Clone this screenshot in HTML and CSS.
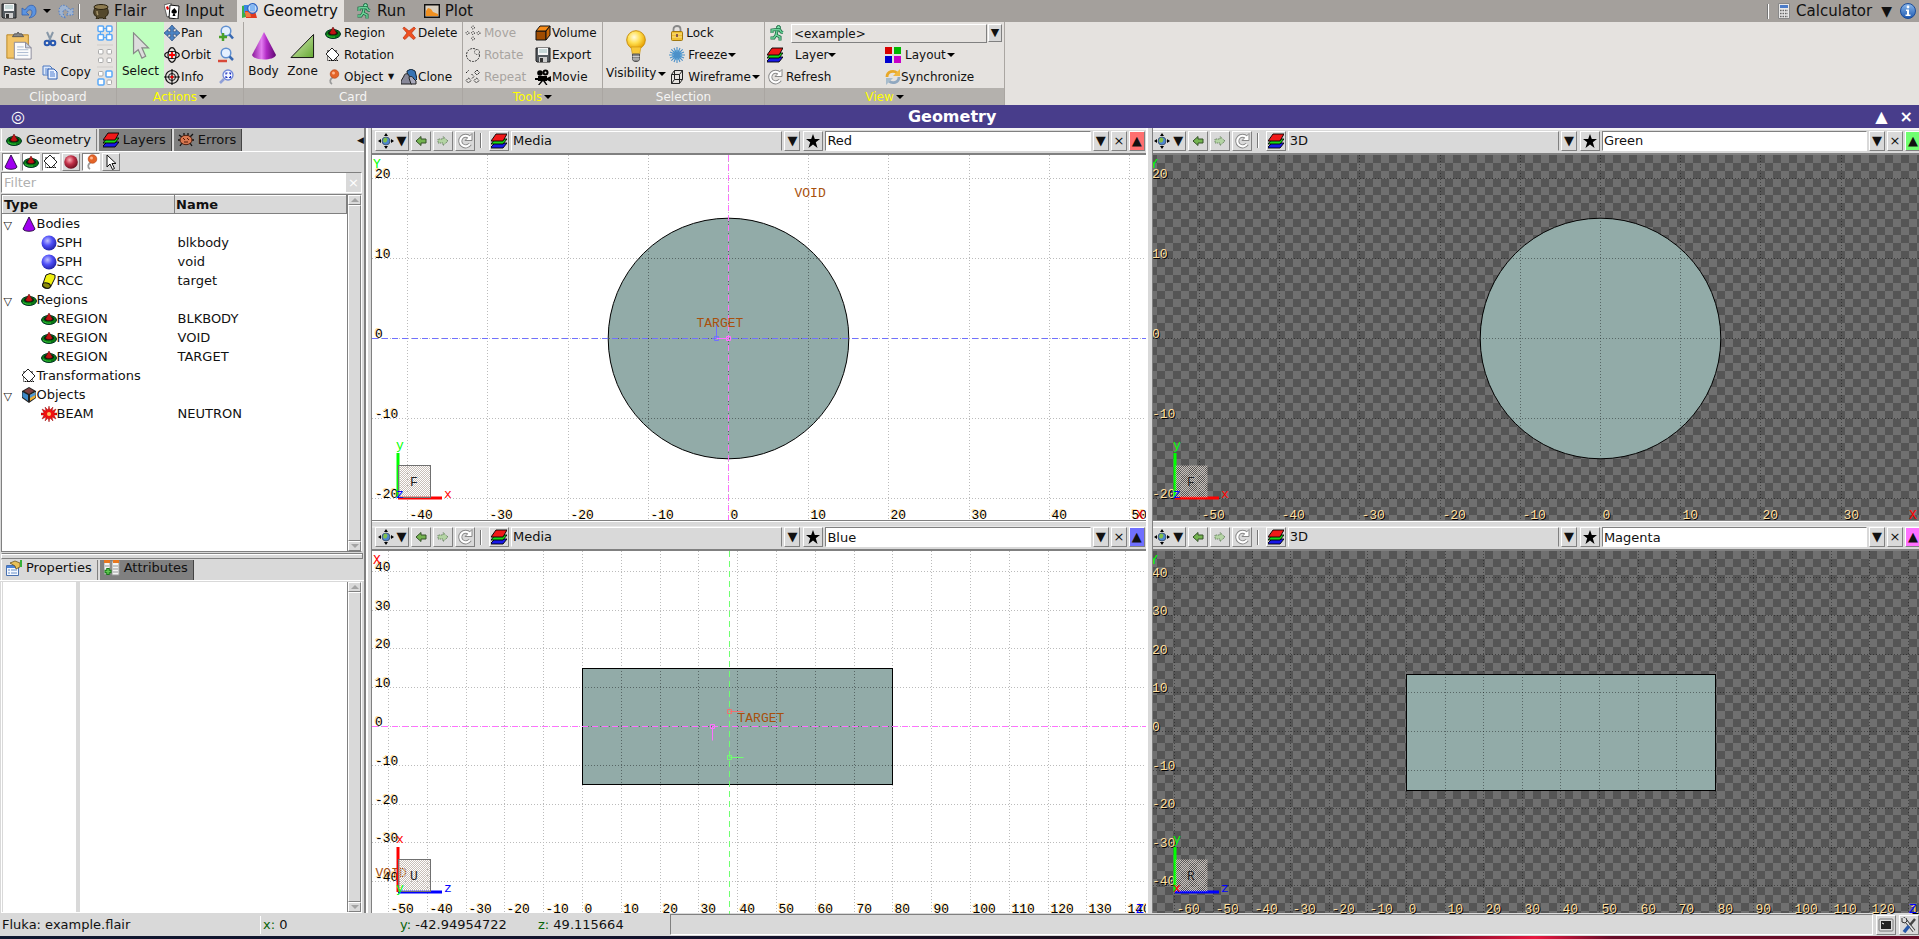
FILE: index.html
```html
<!DOCTYPE html>
<html lang="en">
<head>
<meta charset="utf-8">
<title>Flair - Geometry</title>
<link rel="stylesheet" href="styles.css">
</head>
<body>
<svg class="defs" width="0" height="0" aria-hidden="true">
  <defs>
    <linearGradient id="gCone" x1="0" x2="1" y1="0" y2="0"><stop offset="0" stop-color="#8a1b9a"/><stop offset=".4" stop-color="#e27cf0"/><stop offset=".6" stop-color="#b32cc6"/><stop offset="1" stop-color="#5e0870"/></linearGradient>
    <linearGradient id="gZone" x1="0" x2="1" y1="0" y2="1"><stop offset="0" stop-color="#e2f2c4"/><stop offset="1" stop-color="#64a832"/></linearGradient>
    <radialGradient id="gBlue" cx=".4" cy=".35" r=".65"><stop offset="0" stop-color="#c0c0ff"/><stop offset=".5" stop-color="#5050f8"/><stop offset="1" stop-color="#2424a8"/></radialGradient>
    <radialGradient id="gRed" cx=".4" cy=".35" r=".65"><stop offset="0" stop-color="#ffb0b8"/><stop offset=".5" stop-color="#c03048"/><stop offset="1" stop-color="#701020"/></radialGradient>
    <radialGradient id="gBulb" cx=".4" cy=".35" r=".65"><stop offset="0" stop-color="#fffbe0"/><stop offset=".5" stop-color="#ffdf50"/><stop offset="1" stop-color="#e8a000"/></radialGradient>
    <linearGradient id="gInfo" x1="0" x2="0" y1="0" y2="1"><stop offset="0" stop-color="#8cb8ea"/><stop offset="1" stop-color="#1c58b0"/></linearGradient>
    <pattern id="dither" width="2" height="2" patternUnits="userSpaceOnUse"><path d="M0 0h1v1H0zM1 1h1v1H1z" fill="#c8bfb8"/></pattern>
  </defs>
  <symbol id="save" viewBox="0 0 16 16"><path d="M1 1h14v14H2l-1-1z" fill="#555b60" stroke="#222"/><path d="M3 1h10v7H3z" fill="#f4f4f4"/><path d="M4 3h8M4 5h8" stroke="#9bb"/><path d="M4 10h8v5H4z" fill="#ccc"/><path d="M5 11h3v4H5z" fill="#333"/></symbol>
  <symbol id="undo" viewBox="0 0 16 16"><path d="M1 5v7h7L5.500 9.500C7 6 11 6 11 9c0 3-1 4-3 6 5-1 7-3 7-7 0-7-7-8-11-1z" fill="#5c94e0" stroke="#3060b0" stroke-width=".8"/></symbol>
  <symbol id="redo" viewBox="0 0 16 16"><path d="M15 5v7H8l2.500-2.500C9 6 5 6 5 9c0 3 1 4 3 6-5-1-7-3-7-7 0-7 7-8 11-1z" fill="#9fb4d0" stroke="#4c7cc8" stroke-dasharray="1.500 1.500"/></symbol>
  <symbol id="pot" viewBox="0 0 16 16"><path d="M2 5C0 8 0 12 4 14l-1 2h2l1-1h4l1 1h2l-1-2c4-2 4-6 2-9z" fill="#54482c" stroke="#2a220f"/><ellipse cx="8" cy="4" rx="7" ry="2.500" fill="#8c7a50" stroke="#2a220f"/><path d="M4 8c0 2 0 3 1 4" stroke="#a8966c" stroke-width="1.500" fill="none"/></symbol>
  <symbol id="cards" viewBox="0 0 16 16"><path d="M0 2l7-2 2 12-6 2z" fill="#fff" stroke="#333" stroke-width=".7"/><path d="M2 4l2-1 1 3-2 1z" fill="#d00"/><path d="M6 2l9 1-1 13-9-1z" fill="#fff" stroke="#111"/><path d="M10.500 5c2 3 3 3 2 5-1 1-2 0-2 0l1 3H8.500l1-3s-2 1-2-1c0-2 1-2 3-4z"/></symbol>
  <symbol id="geo" viewBox="0 0 16 16"><path d="M0 3l4-1v12l-4 1z" fill="#38b048"/><path d="M2 2h4v8H2z" fill="#3c88e0"/><path d="M3 8h10l2 7H4z" fill="#e03a20"/><path d="M3 9h5l1 5H4z" fill="#f07c40"/><circle cx="10.500" cy="5.500" r="4.800" fill="#bcdcff" fill-opacity=".85" stroke="#2860c0" stroke-width="1.200"/><path d="M8 2h5v6H8z" fill="#5ca0ee" opacity=".6"/></symbol>
  <symbol id="runner" viewBox="0 0 16 16"><circle cx="9.500" cy="2.500" r="2" fill="#7ce0a8" stroke="#186840"/><path d="M3 8V5l5-.500 3 .500 1 2 2 .500M8 6L7 10l4 2v3.500M7 10l-2 3H1.500" fill="none" stroke="#186840" stroke-width="3"/><path d="M3 8V5l5-.500 3 .500 1 2 2 .500M8 6L7 10l4 2v3.500M7 10l-2 3H1.500" fill="none" stroke="#6ed49a" stroke-width="1.400"/></symbol>
  <symbol id="plot" viewBox="0 0 16 16"><path d="M.7 1.700h14.600v12.600H.7z" fill="#d8cfc0" stroke="#111" stroke-width="1.400"/><path d="M2 13V8l2-3 3 1 2 3 5 2v2z" fill="#f09020"/></symbol>
  <symbol id="calc" viewBox="0 0 12 16"><path d="M.5.5h11v15H.5z" fill="#e8e8e8" stroke="#888"/><path d="M2 2h8v3H2z" fill="#4c7cc8"/><path d="M2 7.500h8M2 10.500h8M2 13.500h8" stroke="#666" stroke-width="1.600" stroke-dasharray="1.600 .9"/></symbol>
  <symbol id="info" viewBox="0 0 16 16"><circle cx="8" cy="8" r="7.500" fill="url(#gInfo)" stroke="#1c4c98"/><circle cx="8" cy="4" r="1.400" fill="#fff"/><path d="M6 6.500h3v5h1.500V13h-5v-1.500H7V8H6z" fill="#fff"/></symbol>
  <symbol id="paste" viewBox="0 0 28 30"><path d="M1 3h23v25H1z" fill="#f2c468" stroke="#b88420"/><path d="M7 5l2-3h3l1-2 1 2h3l2 3z" fill="#888" stroke="#555"/><path d="M9 11h12l6 6v12H9z" fill="#fbfbfb" stroke="#889"/><path d="M21 11v6h6z" fill="#ccd4e0" stroke="#889"/><path d="M12 16h7M12 19h12M12 22h12M12 25h12" stroke="#a8b8d0"/></symbol>
  <symbol id="cut" viewBox="0 0 16 16"><path d="M5 1l4 9M11 1L7 10" stroke="#8898a8" stroke-width="2"/><circle cx="5" cy="12" r="2.300" fill="none" stroke="#2858b0" stroke-width="2"/><circle cx="11" cy="12" r="2.300" fill="none" stroke="#2858b0" stroke-width="2"/></symbol>
  <symbol id="copy" viewBox="0 0 16 16"><path d="M1 2h7l2 2v7H1z" fill="#dce8fa" stroke="#4c78c0"/><path d="M3 5h4M3 7h4M3 9h4" stroke="#5c88d0"/><path d="M6 5h6l3 3v7H6z" fill="#eaf2ff" stroke="#2c5cb0"/><path d="M8 8h4M8 10h5M8 12h5" stroke="#4c7cd0"/></symbol>
  <symbol id="selAll" viewBox="0 0 16 16"><path d="M4 3.500h8M4 12.500h8M3.500 4v8M12.500 4v8" stroke="#58a8f8"/><g fill="#fff" stroke="#58a8f8" stroke-width="1.500"><rect x="1" y="1" width="5.500" height="5.500" rx="1"/><rect x="9.500" y="1" width="5.500" height="5.500" rx="1"/><rect x="1" y="9.500" width="5.500" height="5.500" rx="1"/><rect x="9.500" y="9.500" width="5.500" height="5.500" rx="1"/></g></symbol>
  <symbol id="selNone" viewBox="0 0 16 16"><g fill="#fff" stroke="#aaa"><rect x="1.500" y="1.500" width="4.500" height="4.500" rx="1"/><rect x="10" y="1.500" width="4.500" height="4.500" rx="1"/><rect x="1.500" y="10" width="4.500" height="4.500" rx="1"/><rect x="10" y="10" width="4.500" height="4.500" rx="1"/></g></symbol>
  <symbol id="selInv" viewBox="0 0 16 16"><g fill="#fff" stroke="#aaa"><rect x="1.500" y="1.500" width="4.500" height="4.500" rx="1"/><rect x="10" y="10" width="4.500" height="4.500" rx="1"/></g><g fill="#fff" stroke="#58a8f8" stroke-width="1.500"><rect x="9" y="1" width="6" height="6" rx="1"/><rect x="1" y="9" width="6" height="6" rx="1"/></g></symbol>
  <symbol id="arrow" viewBox="0 0 20 30"><path d="M2 1v22l5-4 4 9 4-2-4-9h7z" fill="#ddd" stroke="#888" stroke-width="1.300"/></symbol>
  <symbol id="pan" viewBox="0 0 16 16"><path d="M8 0l3.500 4H9.300v2.700H12V4.500L16 8l-4 3.500V9.300H9.300V12h2.200L8 16l-3.500-4h2.200V9.300H4v2.200L0 8l4-3.500v2.200h2.700V4H4.500z" fill="#4c84c4" stroke="#284c80" stroke-width=".7"/></symbol>
  <symbol id="orbit" viewBox="0 0 16 16"><ellipse cx="8" cy="8" rx="7.300" ry="3.500" fill="none" stroke="#111" stroke-width="1.200"/><ellipse cx="8" cy="8" rx="4" ry="7.300" fill="none" stroke="#111" stroke-width="1.200"/><path d="M5 5h6v6H5z" fill="#e5e2df"/><path d="M8 5v6M5 8h6" stroke="#f00" stroke-width="1.800"/></symbol>
  <symbol id="target" viewBox="0 0 16 16"><circle cx="8" cy="8" r="6.500" fill="none" stroke="#111" stroke-width="1.200"/><circle cx="8" cy="8" r="3.500" fill="none" stroke="#111"/><path d="M8 0v16M0 8h16" stroke="#111" stroke-width="1.200"/><circle cx="8" cy="8" r="1.500" fill="#e00"/></symbol>
  <symbol id="zoomIn" viewBox="0 0 16 16"><circle cx="8" cy="6" r="4.800" fill="#e4f0ff" stroke="#6090d0" stroke-width="1.500"/><path d="M11.500 9.500L15 13.500" stroke="#3868b0" stroke-width="2.500"/><path d="M5 8v8M1 12h8" stroke="#48a028" stroke-width="2.500"/></symbol>
  <symbol id="zoomOut" viewBox="0 0 16 16"><circle cx="8" cy="6" r="4.800" fill="#e4f0ff" stroke="#6090d0" stroke-width="1.500"/><path d="M11.500 9.500L15 13" stroke="#3868b0" stroke-width="2.500"/><path d="M0 14h9" stroke="#d84838" stroke-width="2.500"/></symbol>
  <symbol id="zoomFit" viewBox="0 0 16 16"><circle cx="10" cy="6" r="5" fill="#f4f8ff" stroke="#7088d8" stroke-width="1.300"/><path d="M6 10l-4 4" stroke="#90a0d8" stroke-width="2.500"/><path d="M8 5.500V4h1.500M11 4h1.500v1.500M12.500 7v1.500H11M9.500 8.500H8V7" fill="none" stroke="#2030c0" stroke-width="1.200"/></symbol>
  <symbol id="bigCone" viewBox="0 0 26 28"><path d="M13 0L1 23c2 6 22 6 24 0z" fill="url(#gCone)"/></symbol>
  <symbol id="zone" viewBox="0 0 26 26"><path d="M24.500 1v24H1z" fill="url(#gZone)" stroke="#111"/></symbol>
  <symbol id="region" viewBox="0 0 16 16"><ellipse cx="8" cy="9" rx="7.500" ry="4.500" fill="#0a7a14" stroke="#032"/><ellipse cx="8" cy="8" rx="5" ry="2.300" fill="#021"/><path d="M8 2L4.500 8c1 2 6 2 7 0z" fill="#c01414" stroke="#400" stroke-width=".5"/><path d="M2 10c2 2 5 2.500 8 2" stroke="#30c038" fill="none"/></symbol>
  <symbol id="rot" viewBox="0 0 16 16"><path d="M2.500 3.500h9v10h-9z" fill="none" stroke="#111" stroke-dasharray="1 1"/><path d="M7 1l7 7-6 6-7-7z" fill="#fff" stroke="#222"/><path d="M4 13.500h10" stroke="#111" stroke-dasharray="1 1"/></symbol>
  <symbol id="pin" viewBox="0 0 16 16"><path d="M8 8c-3 2-4 5-1 7" fill="none" stroke="#999" stroke-width="1.800"/><circle cx="9.500" cy="5" r="4.300" fill="#e46428" stroke="#b04010" stroke-width=".6"/><circle cx="8.500" cy="4" r="1.500" fill="#ffb890"/></symbol>
  <symbol id="del" viewBox="0 0 16 16"><path d="M3 2l5 4 5-4 1.500 1.500L10.500 8l4 5-2 1.500L8 10.500 4 14.500 2 13l4-5-4-4.500z" fill="#f05020" stroke="#b83010" stroke-width=".7"/></symbol>
  <symbol id="clone" viewBox="0 0 16 16"><path d="M6 2l4-2 4 2 2 8-2 2H7z" fill="#3874b4" stroke="#123"/><path d="M3 7c0-3 5-3 5 0l3 5v3H0v-3z" fill="#889" stroke="#222"/><path d="M8 9c0-2 4-2 4 0l3 3v3h-5z" fill="#aab" stroke="#222"/></symbol>
  <symbol id="move" viewBox="0 0 16 16"><g fill="none" stroke="#222" stroke-dasharray="1 1"><circle cx="8" cy="2.500" r="1.500"/><circle cx="8" cy="8" r="1.500"/><circle cx="8" cy="13.500" r="1.500"/><circle cx="2.500" cy="8" r="1.500"/><circle cx="13.500" cy="8" r="1.500"/></g></symbol>
  <symbol id="rotate" viewBox="0 0 16 16"><g fill="none" stroke="#333"><circle cx="8" cy="8" r="6.500" stroke-dasharray="2 1"/><circle cx="12" cy="5" r="2.500" fill="#e5e2df" stroke-dasharray="1 1"/></g></symbol>
  <symbol id="repeat" viewBox="0 0 16 16"><g fill="none" stroke="#222" stroke-dasharray="1.500 .700"><path d="M3.500 9l2.500 2.500L3.500 14 1 11.500zM11.500 9l2.500 2.500-2.500 2.500L9 11.500zM12 1l2.500 2.500L12 6 9.500 3.500zM6.500 5L9 7.500 6.500 10M1 4l3-3"/></g></symbol>
  <symbol id="volume" viewBox="0 0 16 16"><path d="M1 6h10v9H1z" fill="#a04c00" stroke="#111"/><path d="M1 6l4-5h10l-4 5z" fill="#f88c18" stroke="#111"/><path d="M11 6l4-5v9l-4 5z" fill="#c86808" stroke="#111"/></symbol>
  <symbol id="movie" viewBox="0 0 16 16"><circle cx="5" cy="4" r="2.800"/><circle cx="10.500" cy="3.500" r="3"/><path d="M3 7h9v5H3zM12 9l4-2v6l-4-2zM0 9h3v2H0zM6 12l-3 4h1.500L8 12l3 4h1.500L10 12z"/><circle cx="10.500" cy="3.500" r="1" fill="#ddd"/></symbol>
  <symbol id="bulb" viewBox="0 0 20 32"><circle cx="10" cy="10" r="9.300" fill="url(#gBulb)" stroke="#c89010"/><path d="M5 17h10l-1.500 8h-7z" fill="#f8c838" stroke="#c89010" stroke-width=".6"/><path d="M6.500 24h7v6l-2 1.500h-3l-2-1.500z" fill="#888" stroke="#555"/><path d="M6.500 26.500h7M6.500 29h7" stroke="#ccc"/></symbol>
  <symbol id="lock" viewBox="0 0 16 16"><path d="M4.500 7V4c0-4 7-4 7 0v3" fill="none" stroke="#888" stroke-width="1.800"/><rect x="2.500" y="6.500" width="11" height="9" rx="1" fill="#f0c030" stroke="#a07810"/><path d="M3 9h10M3 12h10" stroke="#fae28c"/><path d="M8 9v3" stroke="#634" stroke-width="1.500"/></symbol>
  <symbol id="freeze" viewBox="0 0 16 16"><circle cx="8" cy="8" r="5" fill="#7cbce8"/><path d="M8 0v16M0 8h16M2.300 2.300l11.400 11.400M13.700 2.300L2.300 13.700M5 1l6 14M11 1L5 15M1 5l14 6M1 11l14-6" stroke="#4c90c8" stroke-width="1.100"/></symbol>
  <symbol id="wire" viewBox="0 0 16 16"><path d="M2.500 5.500h8v9h-8zM5.500 1.500h8v9h-8zM2.500 5.500l3-4M10.500 5.500l3-4M10.500 14.500l3-4M2.500 14.500l3-4" fill="none" stroke="#222"/></symbol>
  <symbol id="layers" viewBox="0 0 16 16"><g stroke="#000" stroke-width=".9"><path d="M0 14l4-4h12l-4 5H0z" fill="#1818e8"/><path d="M0 11l4-5h12l-4 5z" fill="#18d818"/><path d="M0 8l5-7h11l-4 7z" fill="#f01818"/></g></symbol>
  <symbol id="layout" viewBox="0 0 16 16"><path d="M0 0h7v7H0z" fill="#d80000"/><path d="M9 0h7v7H9z" fill="#00b800"/><path d="M0 9h7v7H0z" fill="#0000d0"/><path d="M9 9h7v7H9z" fill="#c800c8"/></symbol>
  <symbol id="refresh" viewBox="0 0 16 16"><path d="M12.500 4.500A5.300 5.300 0 1 0 13 11" fill="none" stroke="#888" stroke-width="4"/><path d="M15 .5v7H8z" fill="#fff" stroke="#888"/><path d="M12.500 4.500A5.300 5.300 0 1 0 13 11" fill="none" stroke="#fff" stroke-width="2.200"/></symbol>
  <symbol id="sync" viewBox="0 0 16 16"><path d="M2 8c0-6 7-7 10-4" fill="none" stroke="#e8a828" stroke-width="2.800"/><path d="M15 0v7H8z" fill="#f0b840"/><path d="M14 8c0 6-7 7-10 4" fill="none" stroke="#90a8c0" stroke-width="2.800"/><path d="M1 16V9h7z" fill="#a8bccc"/></symbol>
  <symbol id="bug" viewBox="0 0 16 16"><path d="M1 3l3 2M15 2l-3 3M0 8h3M16 8h-3M2 14l2-3M14 14l-2-3M6 1v3M10 1v3" stroke="#111" stroke-width="1.300"/><ellipse cx="8" cy="8" rx="6" ry="4.700" fill="#d87850" stroke="#502010"/><path d="M5 6l2 2M9 6l2 2M6 10h4" stroke="#501808"/></symbol>
  <symbol id="cone" viewBox="0 0 16 16"><path d="M8 1L2 13c1 3 11 3 12 0z" fill="#a000f0" stroke="#30104c"/></symbol>
  <symbol id="ballRed" viewBox="0 0 16 16"><circle cx="8" cy="8" r="6.800" fill="url(#gRed)"/></symbol>
  <symbol id="ball" viewBox="0 0 16 16"><circle cx="8" cy="8" r="7.500" fill="url(#gBlue)"/></symbol>
  <symbol id="cursor" viewBox="0 0 16 16"><path d="M4 1v12l3-3 2.500 5.500 2-1L9 9.500h4z" fill="#fff" stroke="#111"/></symbol>
  <symbol id="cyl" viewBox="0 0 16 16"><path d="M5 2l4-1.500 5 1.500v3l-4.500 9c-3 3-8 1-8-2z" fill="#f0f010" stroke="#111"/><ellipse cx="5.500" cy="12.500" rx="4" ry="2.500" fill="#8c8c08" stroke="#111" transform="rotate(15 5.500 12.500)"/></symbol>
  <symbol id="box3" viewBox="0 0 16 16"><path d="M8 0l7 4v7l-7 5-7-5V4z" fill="#222"/><path d="M1.500 5L7 8v6l-5.500-4z" fill="#3c88c8"/><path d="M9 8l5.500-3v5.500L9 14z" fill="#f0b030"/><path d="M9 8l5.500-3v3L9 11z" fill="#4c98d8"/><path d="M8 1l5 3-5 3-5-3z" fill="#804040"/></symbol>
  <symbol id="beam" viewBox="0 0 16 16"><path d="M8 0l1 4 3-3-1 4 4-2-2 4h3v2h-3l2 4-4-2 1 4-3-3-1 4-1-4-3 3 1-4-4 2 2-4H0V7h3L1 3l4 2-1-4 3 3z" fill="#f01010" stroke="#800" stroke-width=".4"/><circle cx="8" cy="8" r="2" fill="#ffc060"/></symbol>
  <symbol id="props" viewBox="0 0 16 16"><path d="M.5 5.500h12v10H.5z" fill="#f4f8ff" stroke="#4870b0"/><path d="M1 6h11v2H1z" fill="#4c84d8"/><path d="M2 10h2M5 10h6M2 13h2M5 13h6" stroke="#6890c8"/><path d="M4 3l5-2 5 2v4l-4 2-1-3z" fill="#e8c058" stroke="#5c4410" stroke-width=".7"/><path d="M14 0h2v7h-2z" fill="#38b038"/></symbol>
  <symbol id="attrs" viewBox="0 0 16 16"><path d="M0 1h6v13H0zM8 1h7v14H8z" fill="#f4f4f4" stroke="#999"/><path d="M0 0h6v3H0zM9 0h6v3H9z" fill="#e87820"/><path d="M1 6h4M9 6h5M9 9h5M9 12h5" stroke="#999"/><path d="M4 8v7M.5 11.500h7" stroke="#187818" stroke-width="3.500"/><path d="M4 9v5M1.500 11.500h5" stroke="#60c850" stroke-width="1.500"/></symbol>
  <symbol id="nav" viewBox="0 0 16 16"><path d="M8 0l2 3H6zM8 16l2-3H6zM0 8l3-2v4zM16 8l-3-2v4z"/><circle cx="8" cy="8" r="4" fill="#4c84d0" stroke="#345" stroke-width=".7"/><path d="M6 5c3-1 4 1 3 3s-3 2-4 0z" fill="#80c048"/></symbol>
  <symbol id="left" viewBox="0 0 16 16"><path d="M3 8l5-4.500V6h5v4H8v2.500z" fill="#74b450" stroke="#345028"/></symbol>
  <symbol id="right" viewBox="0 0 16 16"><path d="M13 8L8 3.500V6H3v4h5v2.500z" fill="#b4d4a4" stroke="#567050" stroke-dasharray="1 1"/></symbol>
  <symbol id="star" viewBox="0 0 16 16"><path d="M8 1l1.800 5H15l-4.200 3.200L12.500 15 8 11.500 3.500 15l1.700-5.800L1 6h5.200z"/></symbol>
  <symbol id="term" viewBox="0 0 16 16"><rect x="1" y="2" width="14" height="12" rx="1" fill="#ddd" stroke="#777"/><path d="M3 4h10v8H3z" fill="#222"/><path d="M4 6l2 1" stroke="#fff"/></symbol>
  <symbol id="tools" viewBox="0 0 16 16"><path d="M2 1l3 3 8 10" stroke="#444" stroke-width="3.500" fill="none"/><path d="M2 1l3 3 8 10" stroke="#e8e8e8" stroke-width="1.600" fill="none"/><path d="M1 1v4l3 1 2-2-1-3" fill="#ddd" stroke="#333"/><path d="M14 2l-5 6" stroke="#444" stroke-width="2.500"/><path d="M8 9l-5 6" stroke="#2858a8" stroke-width="3.500"/></symbol>
</svg>

<header class="tabbar">
  <button class="flat quick" aria-label="Save"><svg class="ico"><use href="#save"/></svg></button>
  <button class="flat quick" aria-label="Undo"><svg class="ico"><use href="#undo"/></svg></button>
  <button class="flat quick caret" aria-label="Undo list"></button>
  <button class="flat quick" aria-label="Redo"><svg class="ico"><use href="#redo"/></svg></button>
  <i class="vsep"></i>
  <nav class="tabs">
    <button class="flat tab"><svg class="ico"><use href="#pot"/></svg>Flair</button>
    <button class="flat tab"><svg class="ico"><use href="#cards"/></svg>Input</button>
    <button class="flat tab active"><svg class="ico"><use href="#geo"/></svg>Geometry</button>
    <button class="flat tab"><svg class="ico"><use href="#runner"/></svg>Run</button>
    <button class="flat tab"><svg class="ico"><use href="#plot"/></svg>Plot</button>
  </nav>
  <i class="vsep end"></i>
  <button class="flat tab calc"><svg class="ico slim"><use href="#calc"/></svg>Calculator</button>
  <button class="flat tri" aria-label="More tools">▼</button>
  <button class="flat help" aria-label="Information"><svg class="ico"><use href="#info"/></svg></button>
</header>

<section class="ribbon">
  <div class="group g-clip">
    <div class="body">
      <button class="flat big"><svg class="i28"><use href="#paste"/></svg>Paste</button>
      <div class="stack two">
        <button class="flat"><svg class="ico"><use href="#cut"/></svg>Cut</button>
        <button class="flat"><svg class="ico"><use href="#copy"/></svg>Copy</button>
      </div>
      <div class="stack icons">
        <button class="flat" aria-label="Select all"><svg class="ico"><use href="#selAll"/></svg></button>
        <button class="flat" aria-label="Select none"><svg class="ico"><use href="#selNone"/></svg></button>
        <button class="flat" aria-label="Invert selection"><svg class="ico"><use href="#selInv"/></svg></button>
      </div>
    </div>
    <div class="cap">Clipboard</div>
  </div>
  <div class="group g-act">
    <div class="body">
      <button class="flat big on"><svg class="i28"><use href="#arrow"/></svg>Select</button>
      <div class="stack">
        <button class="flat"><svg class="ico"><use href="#pan"/></svg>Pan</button>
        <button class="flat"><svg class="ico"><use href="#orbit"/></svg>Orbit</button>
        <button class="flat"><svg class="ico"><use href="#target"/></svg>Info</button>
      </div>
      <div class="stack icons right">
        <button class="flat" aria-label="Zoom in"><svg class="ico"><use href="#zoomIn"/></svg></button>
        <button class="flat" aria-label="Zoom out"><svg class="ico"><use href="#zoomOut"/></svg></button>
        <button class="flat" aria-label="Zoom fit"><svg class="ico"><use href="#zoomFit"/></svg></button>
      </div>
    </div>
    <button class="flat cap menu">Actions<i class="caret"></i></button>
  </div>
  <div class="group g-card">
    <div class="body">
      <button class="flat big"><svg class="i28"><use href="#bigCone"/></svg>Body</button>
      <button class="flat big"><svg class="i28 trim"><use href="#zone"/></svg>Zone</button>
      <div class="stack gap">
        <button class="flat"><svg class="ico"><use href="#region"/></svg>Region</button>
        <button class="flat"><svg class="ico"><use href="#rot"/></svg>Rotation</button>
        <button class="flat"><svg class="ico"><use href="#pin"/></svg>Object <span class="tiny">▼</span></button>
      </div>
      <div class="stack">
        <button class="flat"><svg class="ico"><use href="#del"/></svg>Delete</button>
        <span></span>
        <button class="flat"><svg class="ico"><use href="#clone"/></svg>Clone</button>
      </div>
    </div>
    <div class="cap">Card</div>
  </div>
  <div class="group g-tools">
    <div class="body">
      <div class="stack gap">
        <button class="flat" disabled><svg class="ico"><use href="#move"/></svg>Move</button>
        <button class="flat" disabled><svg class="ico"><use href="#rotate"/></svg>Rotate</button>
        <button class="flat" disabled><svg class="ico"><use href="#repeat"/></svg>Repeat</button>
      </div>
      <div class="stack">
        <button class="flat"><svg class="ico"><use href="#volume"/></svg>Volume</button>
        <button class="flat"><svg class="ico"><use href="#save"/></svg>Export</button>
        <button class="flat"><svg class="ico"><use href="#movie"/></svg>Movie</button>
      </div>
    </div>
    <button class="flat cap menu">Tools<i class="caret"></i></button>
  </div>
  <div class="group g-sel">
    <div class="body">
      <button class="flat big"><svg class="i32"><use href="#bulb"/></svg><span>Visibility<i class="caret"></i></span></button>
      <div class="stack">
        <button class="flat"><svg class="ico"><use href="#lock"/></svg>Lock</button>
        <button class="flat wide"><svg class="ico"><use href="#freeze"/></svg>Freeze<i class="caret"></i></button>
        <button class="flat wide"><svg class="ico"><use href="#wire"/></svg>Wireframe<i class="caret"></i></button>
      </div>
    </div>
    <div class="cap">Selection</div>
  </div>
  <div class="group g-view">
    <div class="body grid">
      <div class="runsel">
        <label for="run"><svg class="ico"><use href="#runner"/></svg></label>
        <select id="run" aria-label="Run"><option>&lt;example&gt;</option></select>
        <button class="raised" aria-label="Open run list">▼</button>
      </div>
      <button class="flat layer"><svg class="ico"><use href="#layers"/></svg>Layer<i class="caret"></i></button>
      <button class="flat lay"><svg class="ico"><use href="#layout"/></svg>Layout<i class="caret"></i></button>
      <button class="flat"><svg class="ico"><use href="#refresh"/></svg>Refresh</button>
      <button class="flat sync"><svg class="ico"><use href="#sync"/></svg>Synchronize</button>
    </div>
    <button class="flat cap menu">View<i class="caret"></i></button>
  </div>
</section>

<div class="titlebar">
  <span>◎</span><h1>Geometry</h1>
  <button class="flat" aria-label="Maximize">▲</button>
  <button class="flat" aria-label="Close">×</button>
</div>

<main class="work">
  <aside class="side">
    <section class="upper">
      <div class="ntabs">
        <button class="ntab active"><svg class="ico"><use href="#region"/></svg>Geometry</button>
        <button class="ntab"><svg class="ico"><use href="#layers"/></svg>Layers</button>
        <button class="ntab"><svg class="ico"><use href="#bug"/></svg>Errors</button>
        <button class="flat collapse" aria-label="Collapse panel">◀</button>
      </div>
      <div class="sidebox">
        <div class="filters">
          <button class="raised on" aria-label="Bodies"><svg class="ico"><use href="#cone"/></svg></button>
          <button class="raised on" aria-label="Regions"><svg class="ico"><use href="#region"/></svg></button>
          <button class="raised on" aria-label="Transformations"><svg class="ico"><use href="#rot"/></svg></button>
          <button class="raised" aria-label="Materials"><svg class="ico"><use href="#ballRed"/></svg></button>
          <button class="raised on" aria-label="Objects"><svg class="ico"><use href="#pin"/></svg></button>
          <button class="raised" aria-label="Selected"><svg class="ico"><use href="#cursor"/></svg></button>
        </div>
        <div class="filter"><input type="text" placeholder="Filter" aria-label="Filter"><button class="flat" aria-label="Clear filter">×</button></div>
        <div class="treewrap">
          <div class="treearea">
            <table class="tree">
              <thead><tr><th>Type</th><th>Name</th></tr></thead>
              <tbody>
                <tr><td><span class="cell"><i class="exp">▽</i><svg class="ico"><use href="#cone"/></svg>Bodies</span></td><td></td></tr>
                <tr><td><span class="cell sub"><svg class="ico"><use href="#ball"/></svg>SPH</span></td><td>blkbody</td></tr>
                <tr><td><span class="cell sub"><svg class="ico"><use href="#ball"/></svg>SPH</span></td><td>void</td></tr>
                <tr><td><span class="cell sub"><svg class="ico"><use href="#cyl"/></svg>RCC</span></td><td>target</td></tr>
                <tr><td><span class="cell"><i class="exp">▽</i><svg class="ico"><use href="#region"/></svg>Regions</span></td><td></td></tr>
                <tr><td><span class="cell sub"><svg class="ico"><use href="#region"/></svg>REGION</span></td><td>BLKBODY</td></tr>
                <tr><td><span class="cell sub"><svg class="ico"><use href="#region"/></svg>REGION</span></td><td>VOID</td></tr>
                <tr><td><span class="cell sub"><svg class="ico"><use href="#region"/></svg>REGION</span></td><td>TARGET</td></tr>
                <tr><td><span class="cell"><i class="exp"></i><svg class="ico"><use href="#rot"/></svg>Transformations</span></td><td></td></tr>
                <tr><td><span class="cell"><i class="exp">▽</i><svg class="ico"><use href="#box3"/></svg>Objects</span></td><td></td></tr>
                <tr><td><span class="cell sub"><svg class="ico"><use href="#beam"/></svg>BEAM</span></td><td>NEUTRON</td></tr>
              </tbody>
            </table>
          </div>
          <div class="scroll"><i class="up"></i><i class="thumb"></i><i class="down"></i></div>
        </div>
      </div>
    </section>
    <div class="hsash"></div>
    <section class="lower">
      <div class="ntabs">
        <button class="ntab active"><svg class="ico"><use href="#props"/></svg>Properties</button>
        <button class="ntab"><svg class="ico"><use href="#attrs"/></svg>Attributes</button>
      </div>
      <div class="sidebox">
        <div class="treewrap">
          <div class="props"><i></i><i></i></div>
          <div class="scroll"><i class="up"></i><i class="thumb"></i><i class="down"></i></div>
        </div>
      </div>
    </section>
  </aside>
  <div class="vsash"></div>
  <section class="plots" id="plots">
    <div class="hsash across"></div>
    <div class="vsash mid"></div>
  </section>
</main>

<footer class="status">
  <div class="file">Fluka: example.flair</div>
  <div class="coords"><span><b>x:</b> 0</span><span><b>y:</b> -42.94954722</span><span><b>z:</b> 49.115664</span></div>
  <div class="msg"></div>
  <button class="raised" aria-label="Terminal"><svg class="ico"><use href="#term"/></svg></button>
  <button class="raised" aria-label="Settings"><svg class="ico"><use href="#tools"/></svg></button>
</footer>
<div class="desk"></div>

<template id="pane">
  <article class="pane">
    <div class="pbar">
      <button class="raised navb" aria-label="Projection"><svg class="ico"><use href="#nav"/></svg>▼</button>
      <button class="raised" aria-label="Back"><svg class="ico"><use href="#left"/></svg></button>
      <button class="raised" aria-label="Forward"><svg class="ico"><use href="#right"/></svg></button>
      <button class="raised" aria-label="Redraw"><svg class="ico"><use href="#refresh"/></svg></button>
      <i class="vsep"></i>
      <button class="raised" aria-label="Layers"><svg class="ico"><use href="#layers"/></svg></button>
      <select class="layer-name" aria-label="Layer"><option></option></select>
      <button class="raised narrow" aria-label="Open layer list">▼</button>
      <button class="raised" aria-label="Favourites"><svg class="ico"><use href="#star"/></svg></button>
      <input class="view-name" type="text" aria-label="View">
      <button class="raised narrow" aria-label="Open view list">▼</button>
      <button class="raised narrow" aria-label="Close view">×</button>
      <button class="raised narrow mark" aria-label="Expand view">▲</button>
    </div>
    <div class="canvas"></div>
  </article>
</template>
<script src="script.js"></script>
</body>
</html>
```

FILE: styles.css
```css
* { box-sizing: border-box; }
html, body { height: 100%; }
body {
  margin: 0;
  display: flex;
  flex-direction: column;
  overflow: hidden;
  background: #d9d9d9;
  color: #111;
  font: 13px/18px "DejaVu Sans", sans-serif;
}
button, input, select { font: inherit; color: inherit; margin: 0; padding: 0; border-radius: 0; }
svg { display: block; flex: none; }
i { font-style: normal; }
.defs { position: absolute; }
.ico { width: 16px; height: 16px; }
.ico.slim { width: 12px; }
.i28 { width: 28px; height: 28px; }
.i28.trim { width: 25px; }
.i32 { width: 28px; height: 32px; }
.flat { border: 0; background: none; display: flex; align-items: center; white-space: nowrap; }
.raised {
  display: flex; align-items: center; justify-content: center; flex: none;
  width: 20px; height: 20px;
  background: #d9d9d9; border: 1px solid; border-color: #fff #808080 #808080 #fff;
}
.raised.on { background: #fff; border-color: #808080 #fff #fff #808080; }
.caret { width: 0; height: 0; border: 4px solid transparent; border-top: 4px solid #000; border-bottom: 0; display: inline-block; vertical-align: middle; flex: none; }
.vsep { width: 2px; height: 15px; background: #777; border-right: 1px solid #fff; flex: none; }

/* top tab bar */
.tabbar { display: flex; align-items: center; height: 22px; flex: none; background: #a4a09c; font-size: 15px; padding: 0 3px 0 1px; }
.tabbar .flat { line-height: 20px; }
.quick { margin-right: 4px; }
.quick.caret { margin: 0 7px 0 2px; }
.tabs { display: flex; align-self: stretch; margin-left: 8px; gap: 7px; }
.tab { gap: 5px; }
.tabs .tab { height: 22px; padding: 0 6px 0 5px; }
.tab.active { background: #e5e2df; }
.tabbar .end { margin-left: auto; }
.calc { padding: 0 9px; gap: 6px; }
.tri { margin-right: 8px; font-size: 14px; }

/* ribbon */
.ribbon { display: flex; flex: none; height: 83px; background: #e5e2df; font-size: 12px; }
.group { display: flex; flex-direction: column; border-right: 1px solid #aaa6a2; }
.g-clip { width: 117px; } .g-act { width: 127px; } .g-card { width: 219px; }
.g-tools { width: 140px; } .g-sel { width: 162px; } .g-view { width: 240px; }
.body { display: flex; height: 66px; }
.cap { height: 17px; line-height: 18px; background: #b4b1ad; color: #f4f4f4; text-align: center; justify-content: center; }
.cap.menu { color: #ff0; width: 100%; }
.cap .caret { margin-left: 2px; }
.big { flex-direction: column; justify-content: center; gap: 2px; padding: 2px 3px 0; min-width: 38px; }
.big .caret { margin-left: 2px; }
.big.on { background: #c0ffc0; width: 47px; }
.stack { display: grid; grid-template-rows: repeat(3, 22px); align-items: center; }
.stack.two { grid-template-rows: 33px 33px; margin-left: 4px; }
.stack .flat { gap: 1px; }
.stack.two .flat { gap: 2px; }
.stack.icons { margin-left: auto; padding: 0 3px 0 2px; }
.stack.right { padding-right: 9px; }
.stack.gap .flat { gap: 3px; }
.g-clip .icons .flat + .flat { border-top: 2px solid #dad7d4; height: 22px; }
.g-card .big { width: 39px; }
.g-card .gap { margin-left: 3px; width: 76px; }
.g-tools .gap { margin-left: 2px; width: 70px; }
.tiny { font-size: 8px; margin-left: 2px; }
.flat:disabled { color: #a8a4a0; }
.wide .ico { margin-right: 2px; }
.body.grid { display: grid; grid-template: repeat(3, 22px) / 118px 1fr; align-items: center; padding-left: 2px; }
.body.grid .flat { gap: 3px; }
.body.grid .layer { gap: 12px; }
.body.grid .flat .caret { margin-left: -3px; }
.body.grid .layer .caret { margin-left: -12px; }
.body.grid .lay { gap: 4px; }
.body.grid .sync { gap: 0; }
.runsel { grid-column: 1 / -1; display: flex; gap: 3px; align-items: center; padding: 0 2px; }
.runsel label { margin-right: 3px; }
.runsel select { flex: 1; min-width: 0; height: 19px; margin-right: -2px; appearance: none; background: #e5e2df; border: 1px solid; border-color: #fff #808080 #808080 #fff; padding-left: 2px; border-radius: 0; }
.runsel .raised { width: 14px; height: 18px; font-size: 11px; }

.titlebar { display: flex; align-items: center; flex: none; height: 23px; background: #483d8b; color: #fff; padding: 0 6px 0 11px; font-size: 16px; }
.titlebar h1 { flex: 1; margin: 0; padding-left: 4px; text-align: center; font-size: 16px; line-height: 22px; }
.titlebar .flat + .flat { margin-left: 12px; }
.titlebar .flat:last-child { font-weight: bold; }

/* working area */
.work { flex: 1; min-height: 0; display: grid; grid-template-columns: 366px 6px minmax(0, 1fr); }
.side { display: grid; grid-template-rows: 6fr 8px 5fr; min-height: 0; border-right: 2px solid #808080; }
.upper, .lower { display: flex; flex-direction: column; min-height: 0; }
.ntabs { display: flex; flex: none; height: 23px; align-items: flex-end; padding-left: 1px; }
.lower .ntabs { height: 20px; }
.ntab { display: flex; align-items: center; gap: 4px; height: 22px; line-height: 16px; padding: 0 5px 0 4px; background: #808080; border: 0; border-left: 1px solid #ddd; border-right: 1px solid #444; margin-right: 1px; }
.lower .ntab { height: 20px; padding-bottom: 3px; }
.ntab.active { background: #d9d9d9; border-color: #fff #808080 #fff #fff; }
.collapse { margin-left: auto; font-size: 9px; align-self: center; }
.sidebox { flex: 1; min-height: 0; display: flex; flex-direction: column; border-top: 1px solid #fff; padding: 1px 2px 0 1px; }
.filters { display: flex; padding-bottom: 1px; padding-left: 1px; }
.filters .raised { width: 18px; height: 18px; margin-right: 2px; }
.filter { display: flex; height: 21px; border: 1px solid; border-color: #808080 #fff #fff #808080; margin-bottom: 1px; }
.filter input { flex: 1; border: 0; padding: 0 2px; background: #fff; }
.filter input::placeholder { color: #b0b0b0; opacity: 1; }
.filter .flat { width: 15px; background: #d9d9d9; color: #fff; justify-content: center; }
.treewrap { flex: 1; min-height: 0; display: flex; border: 1px solid; border-color: #808080 #fff #808080 #808080; }
.treearea { flex: 1; background: #fff; overflow: hidden; }
.tree { width: 100%; border-collapse: collapse; table-layout: fixed; }
.tree th { height: 18px; padding: 0 1px; text-align: left; background: #d9d9d9; border: 1px solid; border-color: #fff #808080 #808080 #fff; line-height: 16px; }
.tree td { height: 19px; padding: 0 0 0 3px; line-height: 19px; }
.tree td:first-child { padding: 0; }
.cell { display: flex; align-items: center; height: 19px; }
.cell .exp { width: 17px; font-size: 11px; padding: 4px 0 0 1px; }
.cell .ico { margin-left: 1px; }
.cell.sub { padding-left: 37px; }
.scroll { width: 14px; flex: none; display: flex; flex-direction: column; background: #c3c3c3; border-left: 1px solid #808080; }
.scroll i { display: flex; border: 1px solid; border-color: #fff #808080 #808080 #fff; background: #d9d9d9; }
.scroll .thumb { flex: 1; }
.scroll .up, .scroll .down { height: 10px; align-items: center; justify-content: center; }
.scroll .up::after, .scroll .down::after { content: ""; border: 4px solid transparent; border-top-width: 0; border-bottom: 4px solid #a3a3a3; }
.scroll .down::after { border: 4px solid transparent; border-bottom-width: 0; border-top-color: #a3a3a3; }
.props { flex: 1; display: grid; grid-template-columns: 73px 1fr; gap: 4px; padding-left: 1px; }
.props i { background: #fff; }
.lower .treewrap { border-color: #fff; border-width: 0 1px 1px; }
.hsash { border: 1px solid; border-color: #808080 #808080 #808080 #fff; background: #d9d9d9; margin: 1px; box-shadow: inset 0 1px #fff; }
.vsash { background: #d9d9d9; border-left: 2px solid #fff; border-right: 1px solid #808080; }

.plots { display: grid; grid-template: minmax(0, 65fr) 8px minmax(0, 64fr) / minmax(0, 101fr) 7px minmax(0, 100fr); min-height: 0; }
.hsash.across { grid-area: 2 / 1 / 3 / 4; margin: 0; border-width: 1px 0 2px; border-bottom-color: #e8e8e8; }
.vsash.mid { grid-area: 1 / 2 / 4 / 3; }
.p0 { grid-area: 1 / 1; } .p1 { grid-area: 1 / 3; } .p2 { grid-area: 3 / 1; } .p3 { grid-area: 3 / 3; }
.pane { display: flex; flex-direction: column; overflow-x: clip; min-height: 0; }
.pbar { display: flex; flex: none; align-items: center; gap: 2px; height: 23px; padding: 0 1px 2px 3px; border-bottom: 2px solid #808080; }
.p0 .pbar, .p1 .pbar { height: 27px; padding-top: 2px; box-shadow: inset 0 2px #f4f4f4; }
.p1 .pbar, .p3 .pbar { margin: 0 -3px 0 -4px; }
.pbar .vsep { margin: 0 5px 0 3px; }
.pbar .navb { width: 34px; gap: 3px; }
.pbar .narrow { width: 16px; }
.pbar .narrow + .raised:not(.narrow) { margin-left: 1px; }
.layer-name, .view-name { flex: 44; min-width: 0; height: 20px; border: 1px solid; padding: 0 1px; }
.layer-name { flex-grow: 45; appearance: none; background: #d9d9d9; border-color: #fff #808080 #d9d9d9 #fff; }
.view-name { background: #fff; border-color: #808080 #fff #fff #808080; }
.canvas { flex: 1; min-height: 0; background: #fff; overflow-x: clip; }
.canvas svg { width: 100%; height: 100%; overflow: visible; }
.p1 .canvas, .p3 .canvas { background: repeating-conic-gradient(#707070 0 25%, #555 0 50%) -4px 0 / 16px 16px; }

.plot-text { font: 13px "Liberation Mono", monospace; }
.axis-label { fill: #000; text-shadow: -1px -1px #ffdf9f; }
.dark .axis-label { fill: #ffdf9f; text-shadow: 1px 1px #000; }
.grid-line { stroke: #bbb; stroke-dasharray: 1 2; fill: none; }
.grid-line.over, .dark .grid-line { stroke: #000; stroke-opacity: .4; }
.shape { fill: #92aba8; stroke: #000; }
.zone-name { fill: #a8500c; }
.cross { stroke-dasharray: 6 4; fill: none; }

/* status bar */
.status { display: flex; flex: none; align-items: center; height: 23px; gap: 3px; padding: 1px 0; }
.file { width: 257px; padding-left: 2px; }
.coords { display: grid; grid-template-columns: 137px 138px 1fr; width: 407px; padding-left: 2px; border-left: 1px solid #fff; }
.coords b { color: #0a640a; font-weight: normal; }
.msg { flex: 1; align-self: stretch; border: 1px solid; border-color: #808080 #fff #fff #808080; }
.desk { flex: none; height: 3px; background: linear-gradient(90deg, #101830, #14122c 40%, #1c1020 55%, #5c0820 74%, #e81840 80%, #680c28 84%, #680c28); }
```

FILE: script.js
```js
const SVG = "http://www.w3.org/2000/svg";

/* Views: (dx, dy) is the origin measured from the pane centre, step is pixels per 10 cm. */
const views = [
  { layer: "Media", name: "Red", mark: "#ff7070", step: 80.2, dx: -31, dy: 0, shape: "circle", h: "x", v: "y", out: "z", face: "F",
    cross: { h: "#7070ff", v: "#ff70ff", vx: 0 },
    handles: [[-12, 0, 0, -14, "#7070ff"], [0, 0, -12, 0, "#ff70ff"]],
    names: [["VOID", 66, -142], ["TARGET", -32, -12]] },
  { layer: "3D", name: "Green", mark: "#70ff70", step: 80.2, dx: 64, dy: 0, shape: "circle", h: "x", v: "y", out: "z", face: "F", dark: true },
  { layer: "Media", name: "Blue", mark: "#7070ff", step: 38.8, dx: -177, dy: -7, shape: "rect", h: "z", v: "x", out: "y", face: "U",
    cross: { h: "#ff70ff", v: "#70ff70", vx: 147 },
    handles: [[147, -15, 14, 0, "#f07070"], [130, 0, 0, 14, "#ff70ff"], [147, 31, 14, 0, "#70ff70"]],
    names: [["TARGET", 155, -5], ["VOID", -207, 150]] },
  { layer: "3D", name: "Magenta", mark: "#ff70ff", step: 38.6, dx: -130, dy: -2, shape: "rect", h: "z", v: "y", out: "x", face: "R", dark: true }
];
const axisColour = { x: "#f00", y: "#0f0", z: "#00f" };

function add(parent, tag, attrs, text) {
  const el = document.createElementNS(SVG, tag);
  for (const k in attrs) el.setAttribute(k, attrs[k]);
  if (text !== undefined) el.textContent = text;
  parent.appendChild(el);
  return el;
}

function draw(box, v) {
  box.textContent = "";
  const w = box.clientWidth, h = box.clientHeight;
  const svg = add(box, "svg", { class: v.dark ? "dark" : "light", role: "img", "aria-label": v.name + " view" });
  const left = v.dark ? -4 : 0;
  const ox = Math.round(w / 2 + v.dx) + 0.5, oy = Math.round(h / 2 + v.dy) + 0.5;
  const xs = [], ys = [];
  for (let n = Math.ceil((left - ox) / v.step); ox + n * v.step < w; n++) xs.push([n * 10, Math.floor(ox + n * v.step) + 0.5]);
  for (let n = Math.ceil(-oy / v.step); oy + n * v.step < h; n++) ys.push([-n * 10, Math.floor(oy + n * v.step) + 0.5]);
  const lines = xs.map(g => `M${g[1]} 0V${h}`).join("") + ys.map(g => `M0 ${g[1]}H${w}`).join("");

  add(svg, "path", { class: "grid-line", d: lines });
  const clip = add(svg, "clipPath", { id: "clip" + v.name });
  const geom = v.shape === "circle"
    ? ["circle", { cx: ox, cy: oy, r: v.step * 1.5 }]
    : ["rect", { x: ox, y: Math.round(oy - v.step * 1.5) + 0.5, width: Math.round(v.step * 8), height: Math.round(v.step * 3) }];
  add(clip, geom[0], geom[1]);
  add(svg, geom[0], { ...geom[1], class: "shape" });
  add(svg, "path", { class: "grid-line over", d: lines, "clip-path": `url(#clip${v.name})` });

  if (v.cross) {
    add(svg, "path", { class: "cross", d: `M0 ${oy}H${w}`, stroke: v.cross.h });
    add(svg, "path", { class: "cross", d: `M${ox + v.cross.vx} 0V${h}`, stroke: v.cross.v });
    for (const [x, y, lx, ly, c] of v.handles) {
      add(svg, "path", { d: `M${ox + x - 2} ${oy + y - 2}h4v4h-4zM${ox + x} ${oy + y}l${lx} ${ly}`, stroke: c, fill: "none" });
    }
    for (const [t, x, y] of v.names) add(svg, "text", { class: "plot-text zone-name", x: ox + x, y: oy + y }, t);
  }

  for (const [n, y] of ys) if (y > 12) add(svg, "text", { class: "plot-text axis-label", x: left + 3, y: y - 1 }, n);
  for (const [n, x] of xs) if (x > 12) add(svg, "text", { class: "plot-text axis-label", x: x + 2, y: h - 1 }, n);
  add(svg, "text", { class: "plot-text", x: left + 1, y: 13, fill: axisColour[v.v] }, v.v.toUpperCase());
  add(svg, "text", { class: "plot-text", x: w - 10, y: h - 1, fill: axisColour[v.h] }, v.h.toUpperCase());

  const ax = left + 26, ay = h - 22;
  add(svg, "path", { d: `M${ax} ${ay}v-45`, stroke: axisColour[v.v], "stroke-width": 3 });
  add(svg, "path", { d: `M${ax} ${ay}h44`, stroke: axisColour[v.h], "stroke-width": 3 });
  add(svg, "rect", { x: ax + 0.5, y: ay - 32.5, width: 32, height: 32, fill: "url(#dither)", stroke: v.dark ? "none" : "#707070" });
  add(svg, "text", { class: "plot-text", x: ax + 12, y: ay - 12, fill: "#222" }, v.face);
  add(svg, "text", { class: "plot-text", x: ax - 2, y: ay - 49, fill: axisColour[v.v] }, v.v);
  add(svg, "text", { class: "plot-text", x: ax + 46, y: ay, fill: axisColour[v.h] }, v.h);
  add(svg, "text", { class: "plot-text", x: ax - 2, y: ay, fill: axisColour[v.out] }, v.out);
}

const plots = document.getElementById("plots");
const tpl = document.getElementById("pane");
const boxes = views.map((v, i) => {
  const pane = tpl.content.firstElementChild.cloneNode(true);
  pane.classList.add("p" + i);
  pane.querySelector("option").textContent = v.layer;
  pane.querySelector(".view-name").value = v.name;
  pane.querySelector(".mark").style.background = v.mark;
  plots.appendChild(pane);
  return pane.querySelector(".canvas");
});
const drawAll = () => boxes.forEach((b, i) => draw(b, views[i]));
drawAll();
window.addEventListener("resize", drawAll);
```
